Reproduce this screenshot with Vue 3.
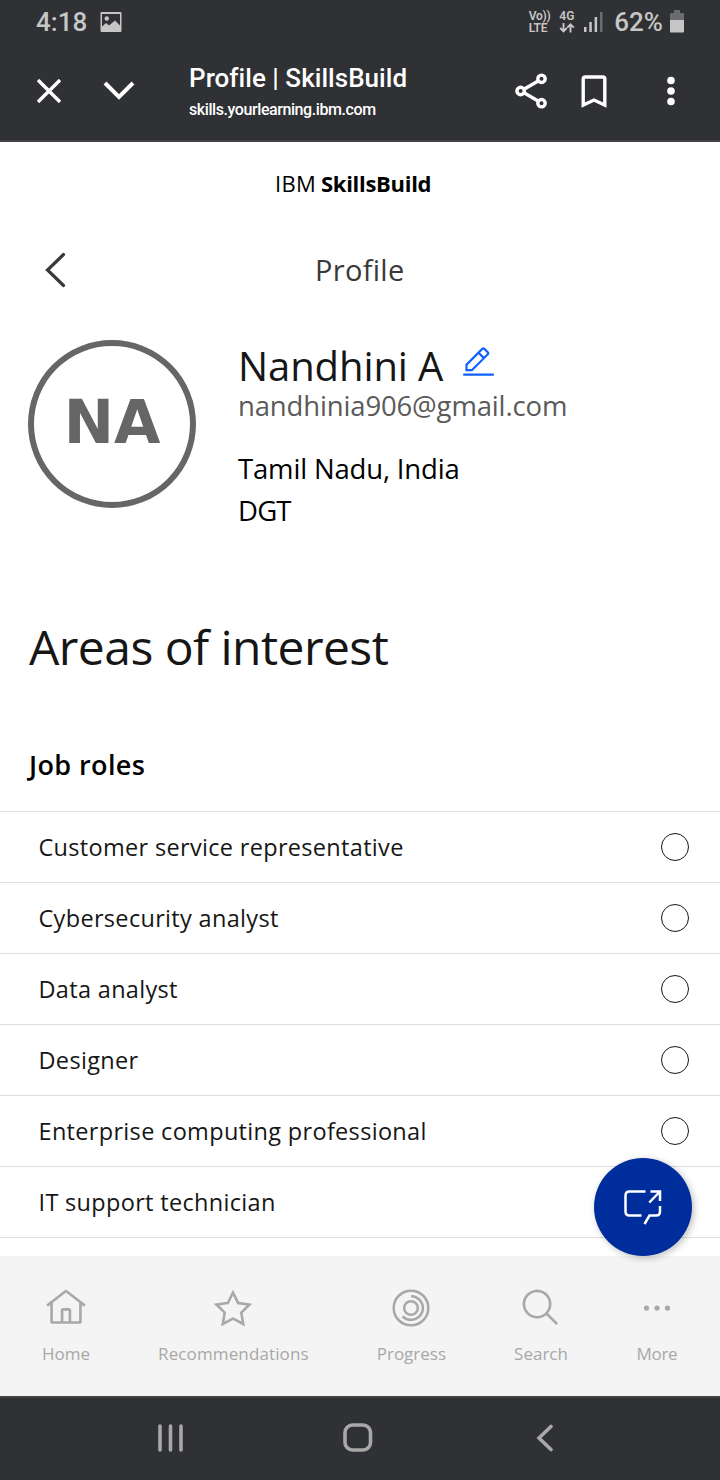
<script setup>
const roles = ['Customer service representative', 'Cybersecurity analyst', 'Data analyst', 'Designer', 'Enterprise computing professional', 'IT support technician']
</script>

<template>
  <div class="screen">
    <header class="chrome">
      <div class="status">
        <span class="time">4:18</span>
        <svg class="photo" width="22" height="20" viewBox="0 0 22 20"><path fill-rule="evenodd" d="M1.500 0H20.500Q21.500 0 21.500 1V19Q21.500 20 20.500 20H1.500Q.5 20 .5 19V1Q.5 0 1.500 0ZM2 2V14.500L6 11L9 13.500L15 8.500L20 13.500V2Z" /><circle cx="6.800" cy="6.500" r="2.200" /></svg>
        <div class="status-right">
          <div class="tiny volte"><span>Vo))</span><span>LTE</span></div>
          <div class="tiny net"><span>4G</span>
            <svg width="16" height="11" viewBox="0 0 16 11" fill="none" stroke="#c6c6c6" stroke-width="1.900"><path d="M4.500 0V8M1.200 5L4.500 8.300L7.800 5M11.500 9.500V1.500M8.200 4.700L11.500 1.400L14.800 4.700" /></svg>
          </div>
          <svg class="signal" width="19" height="20" viewBox="0 0 19 20"><rect x="0" y="15" width="2.500" height="5" /><rect x="5.300" y="10" width="2.500" height="10" /><rect x="10.600" y="5" width="2.500" height="15" /><rect x="16" y="0" width="2.500" height="20" opacity=".4" /></svg>
          <span class="pct">62%</span>
          <svg class="battery" width="14" height="23" viewBox="0 0 14 23"><path opacity=".4" d="M4 0H10V3H13Q14 3 14 4V10H0V4Q0 3 1 3H4Z" /><path d="M0 10H14V21.500Q14 22.500 13 22.500H1Q0 22.500 0 21.500Z" /></svg>
        </div>
      </div>
      <div class="toolbar">
        <svg class="close" width="24" height="24" viewBox="0 0 24 24"><path d="M1 1L23 23M23 1L1 23" /></svg>
        <svg class="down" width="32" height="20" viewBox="0 0 32 20"><path d="M2 2L16 16L30 2" /></svg>
        <div class="page">
          <div class="page-title">Profile | SkillsBuild</div>
          <div class="page-url">skills.yourlearning.ibm.com</div>
        </div>
        <svg class="share" width="34" height="36" viewBox="0 0 34 36"><path d="M6 18L27 5.800M6 18L27 30.200" /><g class="hole"><circle cx="5.600" cy="18" r="3.700" /><circle cx="26.500" cy="5.800" r="3.700" /><circle cx="26.500" cy="30.200" r="3.700" /></g></svg>
        <svg class="bookmark" width="26" height="33" viewBox="0 0 26 33"><path d="M2.200 30V4Q2.200 2 4.200 2H21.800Q23.800 2 23.800 4V30L13 25Z" /></svg>
        <svg class="dots" width="8" height="30" viewBox="0 0 8 30"><circle cx="4" cy="4.500" r="3.800" /><circle cx="4" cy="15" r="3.800" /><circle cx="4" cy="25.500" r="3.800" /></svg>
      </div>
    </header>

    <main class="body">
      <div class="brand"><span class="brand-ibm">IBM</span><span class="brand-sb">SkillsBuild</span></div>
      <div class="heading">
        <svg class="back" width="22" height="36" viewBox="0 0 22 36"><path d="M18.500 2.500L2.500 18L18.500 33.500" /></svg>
        <h1>Profile</h1>
      </div>
      <section class="profile">
        <div class="avatar"><span>NA</span></div>
        <div class="info">
          <div class="name"><span>Nandhini A</span>
            <svg width="35" height="35" viewBox="0 0 32 32"><path d="M2 26h28v2H2zM25.400 9c.8-.8.8-2 0-2.800l-3.600-3.600c-.8-.8-2-.8-2.800 0l-15 15V24h6.400l15-15zm-5-5L24 7.600l-3 3L17.400 7l3-3zM6 22v-3.600l10-10 3.600 3.600-10 10H6z" /></svg>
          </div>
          <div class="email">nandhinia906@gmail.com</div>
          <div class="place">Tamil Nadu, India</div>
          <div class="org">DGT</div>
        </div>
      </section>
      <h2>Areas of interest</h2>
      <h3>Job roles</h3>
      <ul>
        <li v-for="r in roles" :key="r"><span>{{ r }}</span><i class="radio"></i></li>
      </ul>
    </main>

    <nav class="tabs">
      <button class="fab" aria-label="Open chat"><svg width="40" height="36" viewBox="0 0 40 36"><path d="M22.500 2.500H6.500Q2.500 2.500 2.500 6.500V22.500Q2.500 26.500 6.500 26.500H18.500M27.500 2.500H37V12M37 2.500L26.300 13.500M37 17V22.500Q37 26.500 33 26.500H26.500L21.500 35" /></svg></button>
      <div class="tab"><svg viewBox="0 0 32 32"><path d="M16.612 2.214a1.010 1.010 0 0 0-1.243 0L1 13.419l1.243 1.572L4 13.621V26a2 2 0 0 0 2 2H26a2 2 0 0 0 2-2V13.630L29.757 15 31 13.428ZM18 26H14V18h4Zm2 0V18a2 2 0 0 0-2-2H14a2 2 0 0 0-2 2v8H6V12.062l10-7.790 10 7.800V26Z" /></svg><span>Home</span></div>
      <div class="tab"><svg viewBox="0 0 32 32"><path d="M16 6.520l2.760 5.580.46 1 1 .15 6.160.89L22 18.440l-.75.73.18 1 1.050 6.130-5.510-2.890L16 23l-.93.49L9.560 26.340l1-6.130.18-1L10 18.440 5.580 14.090l6.160-.89 1-.15.46-1L16 6.520M16 2l-4.550 9.220L1.280 12.690l7.360 7.180L6.900 30 16 25.220 25.100 30 23.360 19.870l7.360-7.170L20.550 11.220Z" /></svg><span class="wide">Recommendations</span></div>
      <div class="tab"><svg viewBox="0 0 32 32" class="line"><circle cx="16" cy="16" r="13.200" /><circle cx="16" cy="16" r="5.200" /><path d="M16 7A9 9 0 1 1 9.600 22.300" /></svg><span>Progress</span></div>
      <div class="tab"><svg viewBox="0 0 32 32"><path d="M29 27.586l-7.552-7.552a11.018 11.018 0 1 0-1.414 1.414L27.586 29ZM4 13a9 9 0 1 1 9 9A9.010 9.010 0 0 1 4 13Z" /></svg><span>Search</span></div>
      <div class="tab"><svg viewBox="0 0 32 32"><circle cx="8" cy="16" r="2" /><circle cx="16" cy="16" r="2" /><circle cx="24" cy="16" r="2" /></svg><span class="tight">More</span></div>
    </nav>

    <footer class="sys">
      <svg width="27" height="28" viewBox="0 0 27 28"><path d="M3 2V26M13.500 2V26M24 2V26" /></svg>
      <svg width="30" height="30" viewBox="0 0 30 30"><rect x="2" y="2" width="25.500" height="25" rx="7.500" /></svg>
      <svg width="18" height="28" viewBox="0 0 18 28"><path d="M15 2.500L3 14L15 25.500" /></svg>
    </footer>
  </div>
</template>

<style>
body { margin: 0; background: #fff; }
</style>
<style scoped>
.screen { width: 720px; height: 1480px; display: flex; flex-direction: column; overflow: hidden; background: #fff; font-family: "Open Sans", "Noto Sans", sans-serif; color: #161616; }
.screen * { box-sizing: border-box; }
.screen span { white-space: nowrap; }
.chrome { height: 142px; flex: none; background: #303134; border-bottom: 2px solid #444246; font-family: Roboto, sans-serif; }
.status { height: 44px; display: flex; align-items: center; padding: 0 36px; color: #c6c6c6; }
.time { font-size: 26px; font-weight: 500; }
.photo { margin-left: 13px; fill: #c6c6c6; }
.status-right { margin-left: auto; display: flex; align-items: center; }
.tiny { display: flex; flex-direction: column; font-size: 12px; line-height: 12px; font-weight: 600; }
.volte { letter-spacing: -.3px; }
.net { margin-left: 9px; }
.tiny svg { margin-top: 1px; }
.signal, .battery { fill: #c6c6c6; }
.signal { margin-left: 9px; }
.pct { font-size: 26px; font-weight: 500; margin-left: 11px; }
.battery { margin: -2px 0 0 7px; }
.toolbar { height: 94px; display: flex; align-items: center; padding-left: 37px; }
.toolbar svg { fill: none; stroke: #fff; stroke-width: 3.400; flex: none; }
.toolbar .down { margin-left: 42px; stroke-width: 4; }
.page { margin-left: 54px; width: 326px; color: #fff; padding-top: 4px; }
.page-title { font-size: 26px; font-weight: 500; line-height: 32px; letter-spacing: .04px; }
.page-url { font-size: 16px; font-weight: 500; line-height: 31px; letter-spacing: -.42px; }
.toolbar .hole { fill: #303134; }
.toolbar .bookmark { margin-left: 32px; }
.toolbar .dots { margin-left: 60px; fill: #fff; stroke: none; }
.body { flex: 1; min-height: 0; }
.brand { display: flex; gap: 5px; height: 84px; line-height: 82px; padding-left: 275px; font-size: 22px; color: #000; }
.brand-ibm { font-weight: 380; letter-spacing: .3px; }
.brand-sb { font-weight: 700; letter-spacing: -.3px; }
.heading { display: flex; align-items: center; height: 86px; padding-left: 45px; }
.back { fill: none; stroke: #393939; stroke-width: 3.200; stroke-linecap: round; margin-top: 2px; }
h1 { margin: 0 0 0 248px; font-size: 29px; font-weight: 400; letter-spacing: .3px; color: #393939; }
.profile { display: flex; gap: 42px; padding: 28px 0 0 28px; height: 275px; }
.avatar { width: 168px; height: 168px; flex: none; border: 6px solid #666; border-radius: 50%; display: flex; justify-content: center; align-items: center; font: 700 60px/60px "DejaVu Sans", sans-serif; padding-bottom: 4px; color: #666; }
.name { display: flex; height: 49px; line-height: 51px; font-size: 40px; font-weight: 400; letter-spacing: -.1px; }
.name svg { margin: 5px 0 0 18px; fill: #0f62fe; }
.email { font-size: 27.500px; line-height: 33px; font-weight: 400; letter-spacing: -.15px; color: #5a5a5a; }
.place { font-size: 27.500px; line-height: 42px; font-weight: 400; letter-spacing: -.17px; margin-top: 26px; color: #000; }
.org { font-size: 27.500px; line-height: 42px; font-weight: 400; letter-spacing: -.8px; color: #000; }
h2 { margin: 20px 0 0 29px; height: 80px; line-height: 80px; font-size: 48px; font-weight: 400; letter-spacing: -.55px; }
h3 { margin: 58px 0 0 29px; height: 40px; line-height: 40px; font-size: 27px; font-weight: 600; letter-spacing: .4px; color: #000; }
ul { list-style: none; margin: 26px 0 0; padding: 0; border-bottom: 1px solid #dedede; }
li { height: 71px; border-top: 1px solid #dedede; display: flex; align-items: center; justify-content: space-between; padding: 0 31px 0 38.500px; font-size: 23.500px; font-weight: 400; letter-spacing: .32px; }
.radio { width: 28px; height: 28px; border: 1.500px solid #161616; border-radius: 50%; }
.tabs { position: relative; height: 140px; flex: none; background: #f4f4f4; display: flex; justify-content: space-between; padding: 31px 42px 0 42px; color: #a8a8a8; }
.tab { display: flex; flex-direction: column; align-items: center; font-size: 17px; line-height: 24px; }
.wide { letter-spacing: .12px; }
.tight { letter-spacing: -.3px; }
.tab svg { width: 42px; height: 42px; fill: #a8a8a8; margin-bottom: 13px; }
.tab .line { fill: none; stroke: #a8a8a8; stroke-width: 1.900; }
.fab { position: absolute; left: 594px; top: -98px; width: 98px; height: 98px; border: 0; padding: 0; border-radius: 50%; background: #002d9c; box-shadow: 2px 2px 7px rgba(0, 0, 0, .25); display: flex; align-items: center; justify-content: center; }
.fab path { fill: none; stroke: #fff; stroke-width: 2.500; }
.sys { height: 84px; flex: none; border-top: 2px solid #444644; background: #303134; display: flex; align-items: center; padding: 0 0 3px 157px; }
.sys svg { fill: none; stroke: #a8a8a8; stroke-width: 3.600; stroke-linecap: round; }
.sys svg:nth-child(2) { margin-left: 159px; }
.sys svg:nth-child(3) { margin-left: 163px; }
</style>
